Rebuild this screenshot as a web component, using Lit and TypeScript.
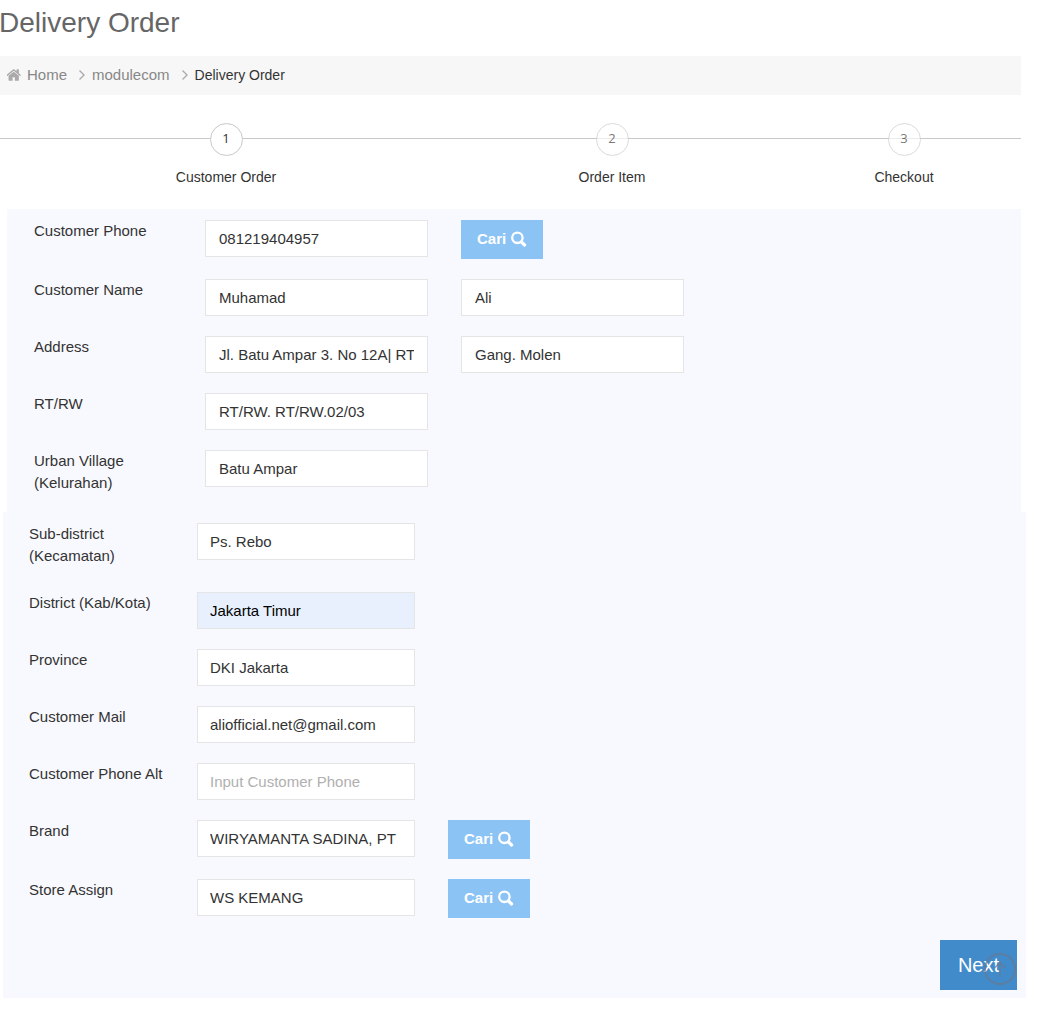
import { LitElement, html, css, svg, nothing } from "lit";
import { customElement } from "lit/decorators.js";
import { classMap } from "lit/directives/class-map.js";

interface Field {
  id: string;
  label: string[];
  value?: string;
  placeholder?: string;
  type?: string;
  filled?: boolean;
  second?: string;
  search?: boolean;
}

const IDENTITY: Field[] = [
  { id: "phone", label: ["Customer Phone"], value: "081219404957", type: "tel", search: true },
  { id: "name", label: ["Customer Name"], value: "Muhamad", second: "Ali" },
  { id: "address", label: ["Address"], value: "Jl. Batu Ampar 3. No 12A| RT/RW.02/03", second: "Gang. Molen" },
  { id: "rtrw", label: ["RT/RW"], value: "RT/RW. RT/RW.02/03" },
  { id: "village", label: ["Urban Village", "(Kelurahan)"], value: "Batu Ampar" },
];

const REGION: Field[] = [
  { id: "subdistrict", label: ["Sub-district", "(Kecamatan)"], value: "Ps. Rebo" },
  { id: "district", label: ["District (Kab/Kota)"], value: "Jakarta Timur", filled: true },
  { id: "province", label: ["Province"], value: "DKI Jakarta" },
  { id: "mail", label: ["Customer Mail"], value: "aliofficial.net@gmail.com", type: "email" },
  { id: "phone-alt", label: ["Customer Phone Alt"], placeholder: "Input Customer Phone", type: "tel" },
  { id: "brand", label: ["Brand"], value: "WIRYAMANTA SADINA, PT", search: true },
  { id: "store", label: ["Store Assign"], value: "WS KEMANG", search: true },
];

const STEPS = ["Customer Order", "Order Item", "Checkout"];

const chevron = html`<svg class="chevron" viewBox="576 448 608 1024" aria-hidden="true">${svg`<path
  d="M1171 960q0 13-10 23l-466 466q-10 10-23 10t-23-10l-50-50q-10-10-10-23t10-23l393-393-393-393q-10-10-10-23t10-23l50-50q10-10 23-10t23 10l466 466q10 10 10 23z"/>`}</svg>`;

@customElement("app-root")
export class AppRoot extends LitElement {
  static styles = css`
    :host {
      display: block;
      overflow: hidden;
      background: #fff;
      color: #333;
      font-family: "Liberation Sans", Arial, sans-serif;
      font-size: 15px;
      line-height: 22px;
    }
    * {
      box-sizing: border-box;
    }
    .title {
      margin: 0 0 0 -1px;
      padding: 6px 0 16px;
      font-size: 28px;
      line-height: 34px;
      font-weight: 400;
      color: #666;
    }
    .breadcrumb {
      display: flex;
      align-items: center;
      margin-right: 24px;
      padding: 0 7px 2px;
      height: 39px;
      background: #f7f7f7;
    }
    .crumb {
      display: flex;
      align-items: center;
      gap: 6px;
      color: #888;
      text-decoration: none;
    }
    .current {
      font-size: 14px;
    }
    .home {
      width: 14px;
      height: 12px;
      fill: #aaa;
    }
    .chevron {
      width: 6px;
      height: 10px;
      margin: 0 7px 0 12px;
      fill: #aaa;
    }
    .steps {
      position: relative;
      display: grid;
      grid-template-columns: 452fr 320fr 264fr;
      margin: 0 9px 0 0;
      padding: 28px 0 21px;
      list-style: none;
    }
    .steps::before {
      content: "";
      position: absolute;
      top: 43px;
      left: 0;
      right: 15px;
      height: 1px;
      background: #c8c8c8;
    }
    .step {
      position: relative;
      display: flex;
      flex-direction: column;
      align-items: center;
      gap: 10px;
      font-size: 14px;
    }
    .number {
      width: 33px;
      height: 33px;
      border: 1px solid #c8c8c8;
      border-radius: 50%;
      background: #fff;
      font-family: "Open Sans", sans-serif;
      font-size: 13px;
      line-height: 28px;
      text-align: center;
    }
    .pending {
      opacity: 0.65;
    }
    .panel {
      display: grid;
      row-gap: 20px;
      background: #f8f9fe;
    }
    .identity {
      margin: 0 24px 0 7px;
      padding: 11px 0 13px 27px;
    }
    .region {
      margin: 0 19px 25px 3px;
      padding: 11px 0 8px 26px;
    }
    .row {
      display: grid;
      column-gap: 33px;
      align-items: start;
    }
    .identity .row {
      grid-template-columns: 138fr 223fr 223fr 304fr;
    }
    .region .row {
      grid-template-columns: 135fr 218fr 218fr 327fr;
    }
    .label {
      margin-bottom: 5px;
      white-space: nowrap;
    }
    .line {
      display: block;
    }
    .input {
      width: 100%;
      min-width: 0;
      height: 37px;
      padding: 0 13px;
      border: 1px solid #e5e5e5;
      border-radius: 0;
      background: #fff;
      color: #333;
      font: inherit;
    }
    .region .input {
      padding: 0 12px;
    }
    .region .filled {
      background: #e8f0fe;
      color: #000;
    }
    .input::placeholder {
      color: #b0b0b0;
      opacity: 1;
    }
    .search {
      display: flex;
      justify-self: start;
      align-items: center;
      gap: 5px;
      height: 39px;
      padding: 0 16px 2px;
      border: 0;
      background: #8bc3f5;
      color: #fff;
      font: inherit;
      font-weight: 700;
    }
    .glass {
      width: 16px;
      height: 16px;
    }
    .actions {
      position: relative;
      display: flex;
      justify-content: flex-end;
      padding: 2px 9px 0 0;
    }
    .next {
      height: 50px;
      padding: 0 18px;
      border: 0;
      background: #428bca;
      color: #fff;
      font: inherit;
      font-size: 20px;
    }
    .to-top {
      position: absolute;
      right: 10px;
      bottom: 5px;
      width: 32px;
      height: 32px;
      opacity: 0.7;
    }
    .to-top svg {
      display: block;
    }
  `;

  private renderRow(field: Field) {
    return html`<div class="row">
      <label class="label" for=${field.id}>${field.label.map((part) => html`<span class="line">${part}</span>`)}</label>
      <input
        class=${classMap({ input: true, filled: !!field.filled })}
        id=${field.id}
        type=${field.type ?? "text"}
        .value=${field.value ?? ""}
        placeholder=${field.placeholder ?? nothing}
      />
      ${field.second
        ? html`<input class="input" type="text" aria-label=${field.label[0]} .value=${field.second} />`
        : nothing}
      ${field.search
        ? html`<button class="search" type="button">
            Cari<svg class="glass" viewBox="0 0 16 16" fill="none" stroke="#fff" aria-hidden="true">
              <circle cx="6.4" cy="6.8" r="5.2" stroke-width="2.3" />
              <path d="M10.4 11L13.6 14" stroke-width="3.2" stroke-linecap="round" />
            </svg>
          </button>`
        : nothing}
    </div>`;
  }

  render() {
    return html`
      <h1 class="title">Delivery Order</h1>
      <nav class="breadcrumb">
        <a class="crumb" href="#home">
          <svg class="home" viewBox="80 240 1568 1300" aria-hidden="true">
            <path
              d="M1408 992v480q0 26-19 45t-45 19h-384v-384h-256v384h-384q-26 0-45-19t-19-45v-480q0-1 .5-3t.5-3l575-474 575 474q1 2 1 6zm223-69l-62 74q-8 9-21 11h-3q-13 0-21-7l-692-577-692 577q-12 8-24 7-13-2-21-11l-62-74q-8-10-7-23.5t11-21.5l719-599q32-26 76-26t76 26l244 204v-195q0-14 9-23t23-9h192q14 0 23 9t9 23v408l219 182q10 8 11 21.5t-7 23.5z"
            />
          </svg>
          Home
        </a>
        ${chevron}
        <a class="crumb" href="#modulecom">modulecom</a>
        ${chevron}
        <span class="current">Delivery Order</span>
      </nav>
      <ol class="steps">
        ${STEPS.map(
          (name, i) => html`<li class="step">
            <span class=${classMap({ number: true, pending: i > 0 })}>${i + 1}</span>
            <span>${name}</span>
          </li>`
        )}
      </ol>
      <form>
        <div class="panel identity">${IDENTITY.map((field) => this.renderRow(field))}</div>
        <div class="panel region">
          ${REGION.map((field) => this.renderRow(field))}
          <div class="actions">
            <button class="next" type="button">Next</button>
            <a class="to-top" href="#top" aria-label="Back to top">
              <svg viewBox="0 0 32 32" fill="none" stroke="#687991" stroke-width="2" aria-hidden="true">
                <circle cx="16" cy="16" r="15" />
                <path d="M16 24V9.5M10.5 15L16 9.5L21.5 15" stroke-width="1.6" />
              </svg>
            </a>
          </div>
        </div>
      </form>
    `;
  }
}
